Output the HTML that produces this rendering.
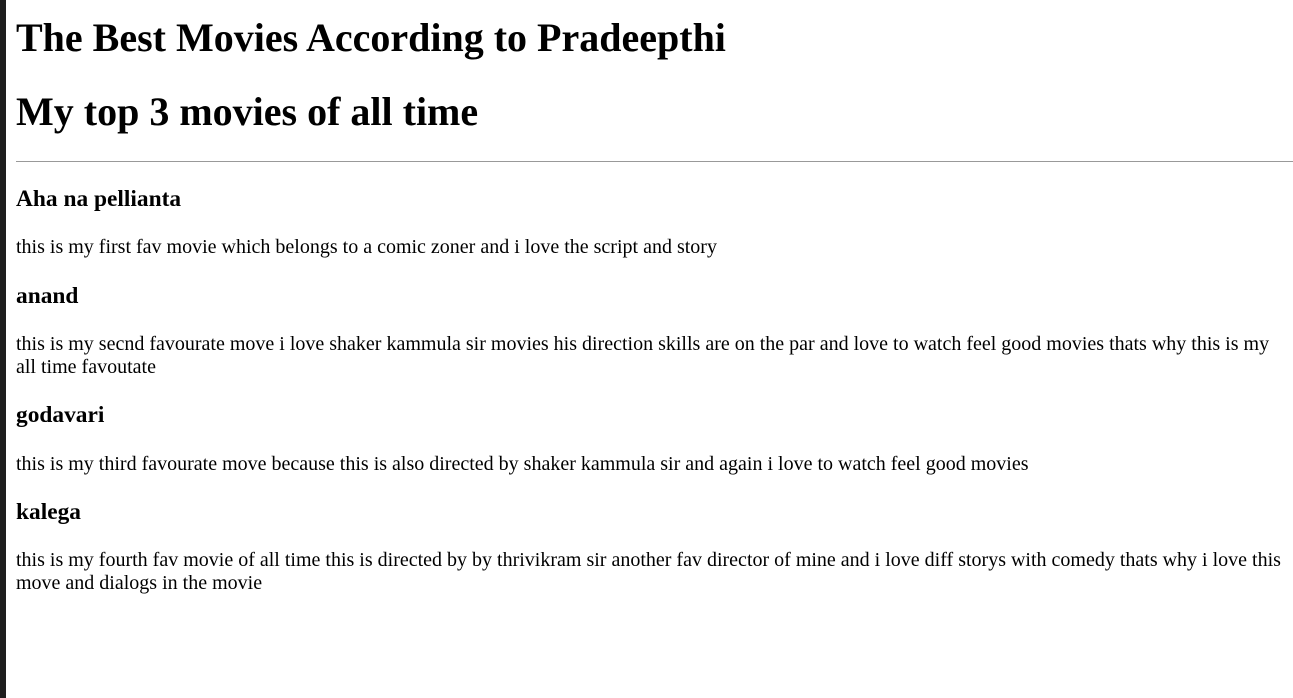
<!DOCTYPE html>
<html><head><meta charset="utf-8"><style>
html{background:#fff}
body{zoom:1.25;margin:0 0 8px 12.8px;font-family:"Liberation Serif",serif;color:#000}
.strip{position:fixed;left:0;top:0;bottom:0;width:4.8px;background:#1e1e1e}
h1.first{margin-top:11px}
h1.second{margin-top:20.6px}
hr{border:none;border-top:1px solid #999;margin:6.8px 0 10px 0}
</style></head><body>
<div class="strip"></div>
<h1 class="first">The Best Movies According to Pradeepthi</h1>
<h1 class="second">My top 3 movies of all time</h1>
<hr>
<h3>Aha na pellianta</h3>
<p>this is my first fav movie which belongs to a comic zoner and i love the script and story</p>
<h3>anand</h3>
<p>this is my secnd favourate move i love shaker kammula sir movies his direction skills are on the par and love to watch feel good movies thats why this is my all time favoutate</p>
<h3>godavari</h3>
<p>this is my third favourate move because this is also directed by shaker kammula sir and again i love to watch feel good movies</p>
<h3>kalega</h3>
<p>this is my fourth fav movie of all time this is directed by by thrivikram sir another fav director of mine and i love diff storys with comedy thats why i love this move and dialogs in the movie</p>
</body></html>
